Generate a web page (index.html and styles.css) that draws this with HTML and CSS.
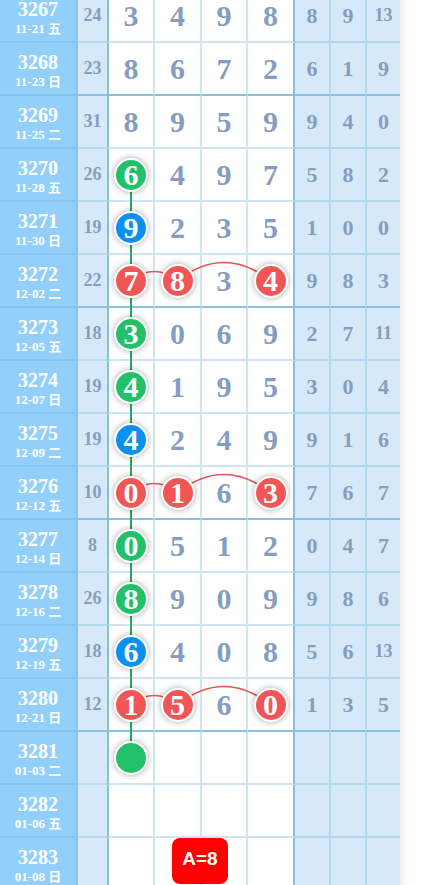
FILE: index.html
```html
<!DOCTYPE html>
<html lang="zh">
<head>
<meta charset="utf-8">
<title>走势图</title>
<link rel="stylesheet" href="styles.css">
</head>
<body>
<div class="page">
  <div class="chart">
    <svg class="links" width="400" height="901" viewBox="0 0 400 901">
      <line x1="131" y1="184.5" x2="131" y2="767.5" stroke="#27a862" stroke-width="2"/>
      <path d="M131 290.5 Q154.25 272.5 177.5 290.5" fill="none" stroke="#e65454" stroke-width="1.6"/>
      <path d="M177.5 290.5 Q224 254.5 270.5 290.5" fill="none" stroke="#e65454" stroke-width="1.6"/>
      <path d="M131 502.5 Q154.25 484.5 177.5 502.5" fill="none" stroke="#e65454" stroke-width="1.6"/>
      <path d="M177.5 502.5 Q224 466.5 270.5 502.5" fill="none" stroke="#e65454" stroke-width="1.6"/>
      <path d="M131 714.5 Q154.25 696.5 177.5 714.5" fill="none" stroke="#e65454" stroke-width="1.6"/>
      <path d="M177.5 714.5 Q224 678.5 270.5 714.5" fill="none" stroke="#e65454" stroke-width="1.6"/>
    </svg>

    <div class="row">
      <div class="c c1"><b class="iss">3267</b><span class="dt">11-21 五</span></div>
      <div class="c c2">24</div>
      <div class="c n">3</div><div class="c n">4</div><div class="c n">9</div><div class="c n n4">8</div>
      <div class="c r">8</div><div class="c r">9</div><div class="c r last sm">13</div>
    </div>
    <div class="row end">
      <div class="c c1"><b class="iss">3268</b><span class="dt">11-23 日</span></div>
      <div class="c c2">23</div>
      <div class="c n">8</div><div class="c n">6</div><div class="c n">7</div><div class="c n n4">2</div>
      <div class="c r">6</div><div class="c r">1</div><div class="c r last">9</div>
    </div>
    <div class="row">
      <div class="c c1"><b class="iss">3269</b><span class="dt">11-25 二</span></div>
      <div class="c c2">31</div>
      <div class="c n">8</div><div class="c n">9</div><div class="c n">5</div><div class="c n n4">9</div>
      <div class="c r">9</div><div class="c r">4</div><div class="c r last">0</div>
    </div>
    <div class="row">
      <div class="c c1"><b class="iss">3270</b><span class="dt">11-28 五</span></div>
      <div class="c c2">26</div>
      <div class="c n"><span class="ball g">6</span></div><div class="c n">4</div><div class="c n">9</div><div class="c n n4">7</div>
      <div class="c r">5</div><div class="c r">8</div><div class="c r last">2</div>
    </div>
    <div class="row">
      <div class="c c1"><b class="iss">3271</b><span class="dt">11-30 日</span></div>
      <div class="c c2">19</div>
      <div class="c n"><span class="ball b">9</span></div><div class="c n">2</div><div class="c n">3</div><div class="c n n4">5</div>
      <div class="c r">1</div><div class="c r">0</div><div class="c r last">0</div>
    </div>
    <div class="row end">
      <div class="c c1"><b class="iss">3272</b><span class="dt">12-02 二</span></div>
      <div class="c c2">22</div>
      <div class="c n"><span class="ball r">7</span></div><div class="c n"><span class="ball r">8</span></div><div class="c n">3</div><div class="c n n4"><span class="ball r">4</span></div>
      <div class="c r">9</div><div class="c r">8</div><div class="c r last">3</div>
    </div>
    <div class="row">
      <div class="c c1"><b class="iss">3273</b><span class="dt">12-05 五</span></div>
      <div class="c c2">18</div>
      <div class="c n"><span class="ball g">3</span></div><div class="c n">0</div><div class="c n">6</div><div class="c n n4">9</div>
      <div class="c r">2</div><div class="c r">7</div><div class="c r last sm">11</div>
    </div>
    <div class="row">
      <div class="c c1"><b class="iss">3274</b><span class="dt">12-07 日</span></div>
      <div class="c c2">19</div>
      <div class="c n"><span class="ball g">4</span></div><div class="c n">1</div><div class="c n">9</div><div class="c n n4">5</div>
      <div class="c r">3</div><div class="c r">0</div><div class="c r last">4</div>
    </div>
    <div class="row">
      <div class="c c1"><b class="iss">3275</b><span class="dt">12-09 二</span></div>
      <div class="c c2">19</div>
      <div class="c n"><span class="ball b">4</span></div><div class="c n">2</div><div class="c n">4</div><div class="c n n4">9</div>
      <div class="c r">9</div><div class="c r">1</div><div class="c r last">6</div>
    </div>
    <div class="row end">
      <div class="c c1"><b class="iss">3276</b><span class="dt">12-12 五</span></div>
      <div class="c c2">10</div>
      <div class="c n"><span class="ball r">0</span></div><div class="c n"><span class="ball r">1</span></div><div class="c n">6</div><div class="c n n4"><span class="ball r">3</span></div>
      <div class="c r">7</div><div class="c r">6</div><div class="c r last">7</div>
    </div>
    <div class="row">
      <div class="c c1"><b class="iss">3277</b><span class="dt">12-14 日</span></div>
      <div class="c c2">8</div>
      <div class="c n"><span class="ball g">0</span></div><div class="c n">5</div><div class="c n">1</div><div class="c n n4">2</div>
      <div class="c r">0</div><div class="c r">4</div><div class="c r last">7</div>
    </div>
    <div class="row">
      <div class="c c1"><b class="iss">3278</b><span class="dt">12-16 二</span></div>
      <div class="c c2">26</div>
      <div class="c n"><span class="ball g">8</span></div><div class="c n">9</div><div class="c n">0</div><div class="c n n4">9</div>
      <div class="c r">9</div><div class="c r">8</div><div class="c r last">6</div>
    </div>
    <div class="row">
      <div class="c c1"><b class="iss">3279</b><span class="dt">12-19 五</span></div>
      <div class="c c2">18</div>
      <div class="c n"><span class="ball b">6</span></div><div class="c n">4</div><div class="c n">0</div><div class="c n n4">8</div>
      <div class="c r">5</div><div class="c r">6</div><div class="c r last sm">13</div>
    </div>
    <div class="row end">
      <div class="c c1"><b class="iss">3280</b><span class="dt">12-21 日</span></div>
      <div class="c c2">12</div>
      <div class="c n"><span class="ball r">1</span></div><div class="c n"><span class="ball r">5</span></div><div class="c n">6</div><div class="c n n4"><span class="ball r">0</span></div>
      <div class="c r">1</div><div class="c r">3</div><div class="c r last">5</div>
    </div>
    <div class="row">
      <div class="c c1"><b class="iss">3281</b><span class="dt">01-03 二</span></div>
      <div class="c c2"></div>
      <div class="c n"><span class="ball g"></span></div><div class="c n"></div><div class="c n"></div><div class="c n n4"></div>
      <div class="c r"></div><div class="c r"></div><div class="c r last"></div>
    </div>
    <div class="row">
      <div class="c c1"><b class="iss">3282</b><span class="dt">01-06 五</span></div>
      <div class="c c2"></div>
      <div class="c n"></div><div class="c n"></div><div class="c n"></div><div class="c n n4"></div>
      <div class="c r"></div><div class="c r"></div><div class="c r last"></div>
    </div>
    <div class="row">
      <div class="c c1"><b class="iss">3283</b><span class="dt">01-08 日</span></div>
      <div class="c c2"></div>
      <div class="c n"></div><div class="c n"></div><div class="c n"></div><div class="c n n4"></div>
      <div class="c r"></div><div class="c r"></div><div class="c r last"></div>
    </div>

    <div class="badge">A=8</div>
  </div>
</div>
</body>
</html>
```

FILE: styles.css
```css
html, body {
  margin: 0;
  padding: 0;
  background: #ffffff;
  overflow: hidden;
}

.page {
  width: 440px;
  height: 885px;
  overflow: hidden;
}

.chart {
  position: relative;
  width: 400px;
  margin-top: -10px;
  box-shadow: 0 0 10px rgba(0, 0, 0, 0.14);
  font-family: "Liberation Serif", "Times New Roman", "Noto Sans CJK SC", serif;
  font-weight: bold;
}

.links {
  position: absolute;
  left: 0;
  top: 0;
  z-index: 1;
}

.row {
  display: grid;
  grid-template-columns: 78px 31px 46px 47px 46px 47px 36px 36px 33px;
  height: 53px;
}

.c {
  box-sizing: border-box;
  display: flex;
  align-items: center;
  justify-content: center;
  border-right: 2px solid #cfe6f2;
  border-bottom: 2px solid #cfe6f2;
  background: #ffffff;
  color: #859dc1;
}

.c1 {
  flex-direction: column;
  padding-top: 5px;
  background: #92d0fb;
  border-right-color: #8ac6ea;
  border-bottom-color: #86c5ee;
  color: #ffffff;
}

.iss {
  font-size: 20px;
  line-height: 20px;
}

.dt {
  font-size: 13px;
  line-height: 19px;
  font-family: "Liberation Serif", "Noto Sans CJK SC", serif;
}

.c2 {
  background: #d6e9f9;
  border-right-color: #86bfe0;
  border-bottom-color: #b6dbf0;
  font-size: 18px;
}

.n {
  font-size: 30px;
}

.n4 {
  border-right-color: #86bfe0;
}

.r {
  background: #d6e9f9;
  border-right-color: #b2d8ee;
  border-bottom-color: #b2d8ee;
  font-size: 22px;
}

.r.last {
  border-right: none;
}

.r.sm {
  font-size: 18px;
}

.row.end .c {
  border-bottom-color: #88c2e2;
}

.ball {
  position: relative;
  z-index: 2;
  box-sizing: border-box;
  width: 34px;
  height: 34px;
  border-radius: 50%;
  border: 2px solid #ffffff;
  box-shadow: 0 0 6px rgba(0, 0, 0, 0.35);
  display: flex;
  align-items: center;
  justify-content: center;
  color: #ffffff;
  font-size: 30px;
  line-height: 1;
}

.ball.g { background: #22c169; }
.ball.b { background: #0a8ff3; }
.ball.r { background: #f25555; }

.badge {
  position: absolute;
  z-index: 3;
  left: 172px;
  top: 848px;
  width: 56px;
  height: 46px;
  box-sizing: border-box;
  padding-bottom: 4px;
  border-radius: 8px;
  background: #ff0000;
  color: #ffffff;
  font-family: "Liberation Sans", Arial, sans-serif;
  font-size: 19px;
  font-weight: bold;
  display: flex;
  align-items: center;
  justify-content: center;
}
```
